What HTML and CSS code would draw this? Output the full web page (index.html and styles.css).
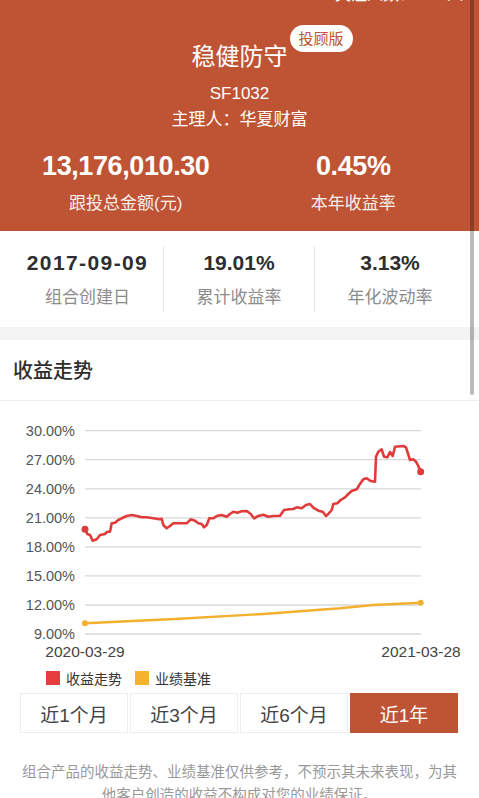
FILE: index.html
```html
<!DOCTYPE html>
<html lang="zh-CN">
<head>
  <meta charset="UTF-8" />
  <meta name="viewport" content="width=device-width, initial-scale=1.0" />
  <title>稳健防守 - 投顾组合</title>
  <link rel="stylesheet" href="styles.css">
</head>
<body>
  <div class="scroll-thumb"></div>

  <header class="hero">
    <div class="follow">关注人数：1111人</div>
    <h1 class="name"><span class="name-text">稳健防守<span class="badge">投顾版</span></span></h1>
    <p class="code">SF1032</p>
    <p class="manager">主理人：华夏财富</p>
    <div class="totals">
      <div class="total">
        <strong>13,176,010.30</strong>
        <span>跟投总金额(元)</span>
      </div>
      <div class="total">
        <strong>0.45%</strong>
        <span>本年收益率</span>
      </div>
    </div>
  </header>

  <section class="stats">
    <div class="stat">
      <strong class="date">2017-09-09</strong>
      <span>组合创建日</span>
    </div>
    <div class="stat">
      <strong>19.01%</strong>
      <span>累计收益率</span>
    </div>
    <div class="stat">
      <strong>3.13%</strong>
      <span>年化波动率</span>
    </div>
  </section>

  <div class="band"></div>

  <section class="trend">
    <h2>收益走势</h2>

    <svg class="chart" width="479" height="264" viewBox="0 401 479 264">
      <g class="grid">
        <line x1="85" x2="421" y1="430.7" y2="430.7" />
        <line x1="85" x2="421" y1="459.7" y2="459.7" />
        <line x1="85" x2="421" y1="488.8" y2="488.8" />
        <line x1="85" x2="421" y1="517.8" y2="517.8" />
        <line x1="85" x2="421" y1="546.9" y2="546.9" />
        <line x1="85" x2="421" y1="575.9" y2="575.9" />
        <line x1="85" x2="421" y1="605" y2="605" />
        <line x1="85" x2="421" y1="634" y2="634" />
      </g>
      <g class="y-labels">
        <text x="75" y="436">30.00%</text>
        <text x="75" y="465">27.00%</text>
        <text x="75" y="494">24.00%</text>
        <text x="75" y="523">21.00%</text>
        <text x="75" y="552">18.00%</text>
        <text x="75" y="581">15.00%</text>
        <text x="75" y="610">12.00%</text>
        <text x="75" y="639">9.00%</text>
      </g>
      <g class="x-labels">
        <text x="85" y="657">2020-03-29</text>
        <text x="421" y="657">2021-03-28</text>
      </g>

      <!-- 业绩基准 -->
      <path class="bench" d="M85,623.3 L175,619 L263.3,614 L340,608.3 L373.3,605 L420.7,602.7" />
      <circle class="bench-dot" cx="85" cy="623.3" r="3" />
      <circle class="bench-dot" cx="420.7" cy="602.7" r="3" />

      <!-- 收益走势 -->
      <path class="profit" d="M85,529.3 L87.3,534 L90,535 L92.7,540.7 L96.7,539.3 L100,535 L105,534 L107.3,531.7 L110,531.7 L111.7,523.3 L115,522.7 L118.3,520 L121.7,518.3 L126.7,516 L131.7,515 L136.7,516 L141.7,517.3 L146.7,517.3 L153.3,518.3 L159.3,519.3 L161.7,518.7 L163.3,525 L166.7,528.3 L170,526 L173.3,523.3 L180,523.3 L186.7,523.3 L190.7,519.3 L195,520.7 L198.3,523.3 L201.7,524 L204,527.3 L206.7,525 L209.3,518.3 L213.3,518.3 L216.7,516 L221.7,515 L226.7,516.7 L230,514 L233.3,511.7 L237.3,512.7 L241.7,511.3 L246.7,511 L250.7,514 L254,518.3 L258.3,516 L263.3,514.7 L268.3,516.7 L273.3,516 L280,515.7 L284,510 L289.3,509.3 L293.3,509 L296.7,507.3 L301.7,508.3 L306,505 L310,504 L313.3,507.7 L318.3,510.7 L322.7,511.7 L326,516 L328.3,514 L331.7,510 L333.3,504 L337.3,503.3 L340.7,500 L345,497.3 L348.3,494 L351.7,491 L356.7,489.3 L359.3,485 L363.3,479.3 L366.7,478.3 L370.7,481 L375,481.7 L376,456.7 L378.3,451.7 L381.7,449.3 L384,456.7 L387.3,457.3 L390,452 L392.7,456 L395,446.7 L403.3,446 L406,447.3 L410,460 L413.3,459.3 L416,461.7 L418.3,466 L420.7,471.7" />
      <circle class="profit-dot" cx="85" cy="529.3" r="3.5" />
      <circle class="profit-dot" cx="420.7" cy="471.7" r="3.5" />
    </svg>

    <div class="legend">
      <span class="legend-item"><i class="swatch swatch-red"></i>收益走势</span>
      <span class="legend-item"><i class="swatch swatch-yellow"></i>业绩基准</span>
    </div>

    <div class="tabs">
      <button class="tab">近1个月</button>
      <button class="tab">近3个月</button>
      <button class="tab">近6个月</button>
      <button class="tab active">近1年</button>
    </div>

    <p class="note">组合产品的收益走势、业绩基准仅供参考，不预示其未来表现，为其他客户创造的收益不构成对您的业绩保证。</p>
  </section>
</body>
</html>
```

FILE: styles.css
```css
body {
  margin: 0;
  font-family: "Liberation Sans", "Noto Sans CJK SC", sans-serif;
  background: #fff;
  color: #333;
  overflow: hidden;
}
.scroll-thumb {
  position: absolute;
  top: 0;
  left: 470px;
  width: 4px;
  height: 395px;
  background: rgba(0, 0, 0, 0.27);
  border-radius: 0 0 2px 2px;
  z-index: 5;
}

/* header */
.hero {
  background: #be5434;
  color: #fff;
  text-align: center;
  padding: 0 0 15px;
}
.follow {
  margin-top: -15px;
  padding-right: 16px;
  text-align: right;
  font-size: 16px;
  line-height: 20px;
}
.name {
  margin: 36px 0 0;
  font-size: 24px;
  line-height: 32px;
  font-weight: 400;
}
.name-text {
  position: relative;
  display: inline-block;
}
.badge {
  position: absolute;
  left: 100%;
  top: -16px;
  margin-left: 2px;
  padding: 0 9px;
  height: 27px;
  line-height: 27px;
  border-radius: 14px;
  background: #fff;
  color: #be5434;
  font-size: 15px;
  white-space: nowrap;
}
.code {
  margin: 9px 0 0;
  font-size: 17px;
  line-height: 24px;
}
.manager {
  margin: 2px 0 0;
  font-size: 17px;
  line-height: 24px;
}
.totals {
  display: grid;
  grid-template-columns: 1fr 1fr;
  padding: 0 12px;
  margin-top: 19px;
}
.total strong {
  display: block;
  font-size: 27px;
  line-height: 30px;
  letter-spacing: -0.4px;
}
.total span {
  display: block;
  margin-top: 11px;
  font-size: 17px;
  line-height: 24px;
  color: rgba(255, 255, 255, 0.93);
}

/* stats */
.stats {
  display: grid;
  grid-template-columns: repeat(3, 1fr);
  padding: 15px 14px 15px 12px;
}
.stat {
  height: 66px;
  display: flex;
  flex-direction: column;
  justify-content: center;
  align-items: center;
}
.stat + .stat {
  border-left: 1px solid #e6e6e6;
}
.stat strong {
  font-size: 21px;
  line-height: 28px;
  color: #2e2e2e;
}
.stat .date {
  letter-spacing: 1.4px;
}
.stat span {
  margin-top: 9px;
  font-size: 17px;
  line-height: 24px;
  color: #8c8c8c;
}
.band {
  height: 13px;
  background: #f3f3f3;
}

/* trend */
.trend h2 {
  margin: 0;
  padding: 2px 13px 0;
  font-size: 20px;
  line-height: 58px;
  font-weight: 500;
  color: #2e2e2e;
  border-bottom: 1px solid #ececec;
}
.chart {
  display: block;
}
.grid line {
  stroke: #d8d8d8;
  stroke-width: 1.3;
}
.y-labels text {
  text-anchor: end;
  font-size: 14.5px;
  fill: #555;
}
.x-labels text {
  text-anchor: middle;
  font-size: 15.5px;
  fill: #444;
}
.profit {
  fill: none;
  stroke: #e03b3b;
  stroke-width: 2.6;
  stroke-linejoin: round;
  stroke-linecap: round;
}
.profit-dot {
  fill: #e03b3b;
}
.bench {
  fill: none;
  stroke: #f2b02e;
  stroke-width: 2.4;
  stroke-linejoin: round;
}
.bench-dot {
  fill: #f2b02e;
}
.legend {
  display: flex;
  align-items: center;
  height: 26px;
  padding-left: 46px;
  gap: 13px;
  font-size: 14px;
  color: #333;
}
.legend-item {
  display: flex;
  align-items: center;
  gap: 6px;
}
.swatch {
  width: 14px;
  height: 14px;
}
.swatch-red {
  background: #e53d3d;
}
.swatch-yellow {
  background: #f5b22c;
}
.tabs {
  display: grid;
  grid-template-columns: repeat(4, 1fr);
  gap: 2px;
  margin: 2px 21px 0 20px;
  height: 40px;
}
.tab {
  border: 1px solid #ededed;
  background: #fff;
  color: #444;
  font-family: inherit;
  font-size: 19px;
  padding: 0;
}
.tab.active {
  background: #be5434;
  border-color: #be5434;
  color: #fff;
}
.note {
  margin: 28px 0 0;
  padding: 0 16px;
  text-align: center;
  font-size: 14.5px;
  line-height: 23px;
  color: #999;
}
```
